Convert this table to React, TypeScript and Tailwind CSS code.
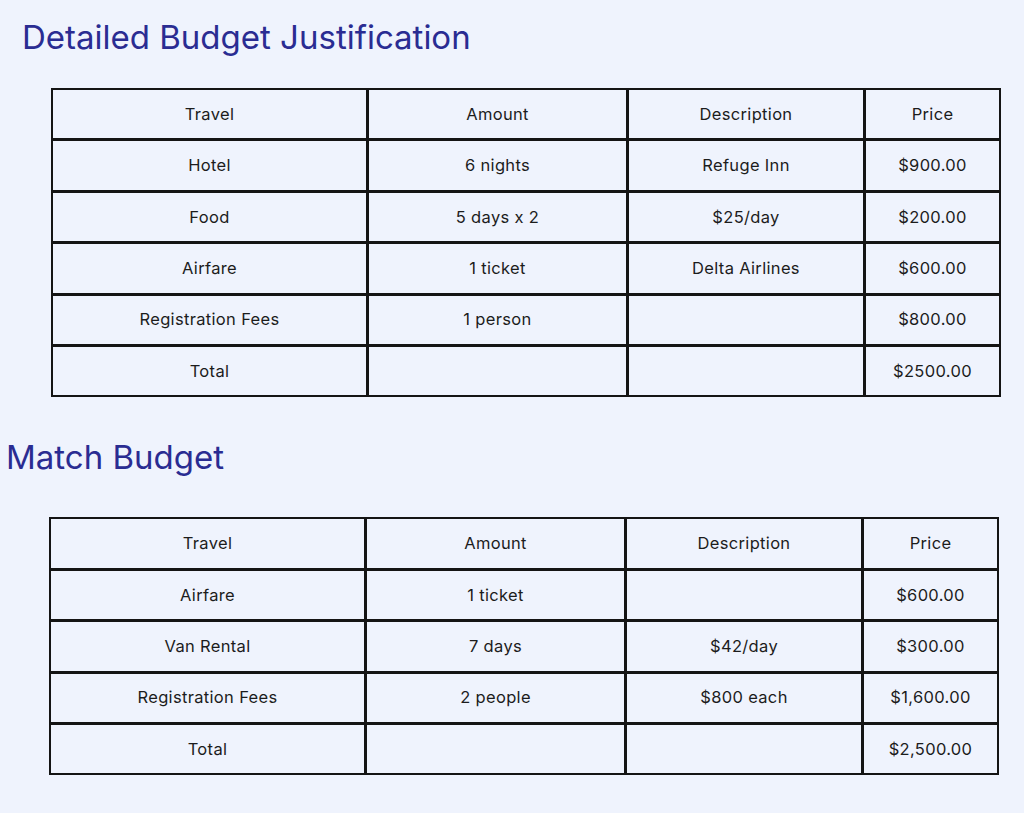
const budget = [
  ["Travel", "Amount", "Description", "Price"],
  ["Hotel", "6 nights", "Refuge Inn", "$900.00"],
  ["Food", "5 days x 2", "$25/day", "$200.00"],
  ["Airfare", "1 ticket", "Delta Airlines", "$600.00"],
  ["Registration Fees", "1 person", "", "$800.00"],
  ["Total", "", "", "$2500.00"],
];

const match = [
  ["Travel", "Amount", "Description", "Price"],
  ["Airfare", "1 ticket", "", "$600.00"],
  ["Van Rental", "7 days", "$42/day", "$300.00"],
  ["Registration Fees", "2 people", "$800 each", "$1,600.00"],
  ["Total", "", "", "$2,500.00"],
];

function BudgetTable({ rows }: { rows: string[][] }) {
  return (
    <div className="grid w-[950px] grid-cols-[313px_257px_234px_1fr] gap-[3px] border-2 border-[#141414] bg-[#141414]">
      {rows.flatMap((row, r) =>
        row.map((cell, c) => (
          <div
            key={`${r}-${c}`}
            className="flex h-[48.4px] items-center justify-center bg-[#eff3fd] text-[16.5px] tracking-[0.02em] text-[#1c1c1c]"
          >
            {cell}
          </div>
        ))
      )}
    </div>
  );
}

export default function App() {
  return (
    <div
      className="min-h-[813px] w-full bg-[#eff3fd] pt-[15px]"
      style={{ fontFamily: "Inter, 'Open Sans', sans-serif" }}
    >
      <h1 className="ml-[22px] text-[33px] leading-[44px] font-normal text-[#2a2c92]">
        Detailed Budget Justification
      </h1>
      <div className="ml-[51px] mt-[29px]">
        <BudgetTable rows={budget} />
      </div>
      <h2 className="ml-[6px] mt-[38px] text-[33px] leading-[44px] font-normal text-[#2a2c92]">
        Match Budget
      </h2>
      <div className="ml-[49px] mt-[38px]">
        <BudgetTable rows={match} />
      </div>
    </div>
  );
}
